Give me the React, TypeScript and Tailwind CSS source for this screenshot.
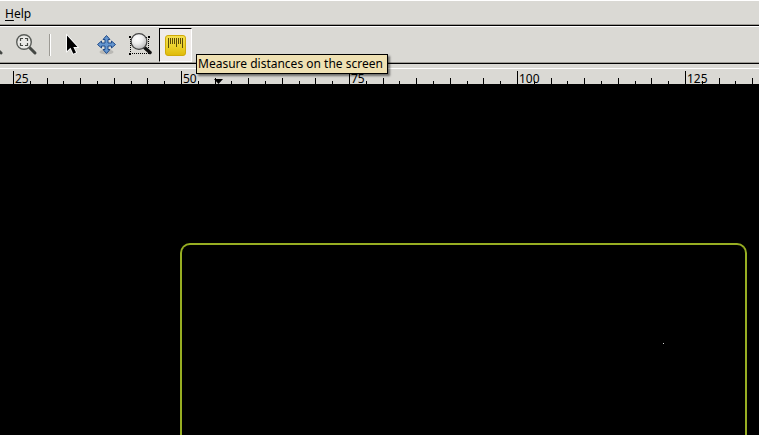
import type { ReactNode } from "react";

const MAJORS = [
  { x: 13, label: "25" },
  { x: 181, label: "50" },
  { x: 349, label: "75" },
  { x: 517, label: "100" },
  { x: 685, label: "125" },
];

function ZoomOutIcon() {
  return (
    <svg width="24" height="24" viewBox="0 0 24 24" fill="none">
      <circle cx="10" cy="9" r="7.3" fill="#e9e9e6" stroke="#5a5d59" strokeWidth="1.4" />
      <path d="M15.500 14.500l5.500 5.500" stroke="#454844" strokeWidth="3" strokeLinecap="round" />
    </svg>
  );
}

function ZoomFitIcon() {
  return (
    <svg width="24" height="24" viewBox="0 0 24 24" fill="none">
      <path d="M15.500 14.500l5.500 5.500" stroke="#454844" strokeWidth="3" strokeLinecap="round" />
      <circle cx="10" cy="9" r="7.3" fill="#e9e9e6" stroke="#5a5d59" strokeWidth="1.4" />
      <path
        d="M6.500 8V5.500H9M11 5.500h2.500V8M13.500 10v2.500H11M9 12.500H6.500V10"
        stroke="#454844"
        strokeWidth="1.200"
      />
    </svg>
  );
}

function ArrowIcon() {
  return (
    <svg width="24" height="24" viewBox="0 0 24 24">
      <path
        d="M7 2.500v15.500l3.500-3.200 2.800 6 2.700-1.300-2.700-5.500h4.200z"
        fill="#000"
        stroke="#fff"
        strokeWidth="1.600"
        paintOrder="stroke"
      />
    </svg>
  );
}

function MoveIcon() {
  return (
    <svg width="24" height="24" viewBox="0 0 24 24">
      <ellipse cx="12.500" cy="19" rx="7" ry="2.500" fill="#000" opacity="0.150" />
      <path
        d="M12.500 2.500l3.500 4h-2v3.500h3.500v-2l4 3.500-4 3.500v-2h-3.500v3.500h2l-3.500 4-3.500-4h2v-3.500h-3.500v2l-4-3.500 4-3.500v2h3.500v-3.500h-2z"
        fill="#6596cf"
        stroke="#204a87"
        strokeWidth="1"
        strokeLinejoin="round"
      />
    </svg>
  );
}

function ZoomSelectionIcon() {
  return (
    <svg width="24" height="24" viewBox="0 0 24 24" fill="none">
      <defs>
        <radialGradient id="lens" cx="0.38" cy="0.3" r="0.75">
          <stop offset="0" stopColor="#fff" />
          <stop offset="0.45" stopColor="#ededed" />
          <stop offset="1" stopColor="#b4b4b4" />
        </radialGradient>
      </defs>
      <path d="M2 4.500h18M2 20.500h18M2.500 4v17M20.500 4v17" stroke="#000" strokeDasharray="1 1" />
      <path d="M1 3h2v2H1zM20 3h2v2h-2zM1 20h2v2H1z" fill="#000" />
      <path d="M17 15l5 4.500" stroke="#111" strokeWidth="3.500" strokeLinecap="round" />
      <circle cx="11" cy="8.500" r="7.900" fill="url(#lens)" stroke="#444" strokeWidth="1.200" />
    </svg>
  );
}

function RulerIcon() {
  return (
    <svg width="24" height="24" viewBox="0 0 24 24">
      <defs>
        <linearGradient id="yellow" x1="0" y1="0" x2="0" y2="1">
          <stop offset="0" stopColor="#f5df50" />
          <stop offset="0.55" stopColor="#ecd22c" />
          <stop offset="1" stopColor="#dfba08" />
        </linearGradient>
      </defs>
      <rect x="1.500" y="2.500" width="20" height="20" rx="2.500" fill="url(#yellow)" stroke="#d0aa08" />
      <path
        d="M4.500 5v10M6.500 5v6M8.500 5v6M10.500 5v6M12.500 5v9M14.500 5v6M16.500 5v6M18.500 5v10"
        stroke="#5c4d08"
        fill="none"
      />
    </svg>
  );
}

function ToolButton({ label, children }: { label: string; children: ReactNode }) {
  return (
    <button
      type="button"
      aria-label={label}
      className="flex h-[34px] w-[34px] shrink-0 items-center justify-center"
    >
      {children}
    </button>
  );
}

function Ruler() {
  return (
    <svg className="relative z-10 block h-[15px] w-full overflow-visible" aria-label="Horizontal ruler">
      {MAJORS.map(({ x, label }) => (
        <g key={label}>
          <rect x={x} y="2" width="1" height="13" />
          {[1, 2, 3, 4, 5, 6, 7, 8, 9].map((n) => {
            const h = n % 2 ? 3 : 6;
            return (
              <rect key={n} x={Math.round(x + n * 16.8)} y={15 - h} width="1" height={h} />
            );
          })}
          <text x={x + 2} y="14" fontSize="12">
            {label}
          </text>
        </g>
      ))}
      <path d="M214 10h9l-4.500 5z" />
    </svg>
  );
}

export default function App() {
  return (
    <div className="flex min-h-screen flex-col overflow-hidden bg-[#dad9d4] font-['Noto_Sans','DejaVu_Sans_Condensed',sans-serif] text-[12px] text-black">
      <nav className="flex h-[26px] items-center border-t border-b border-t-white border-b-black pt-0.5 shadow-[inset_0_-1px_0_#9c9a94]">
        <button type="button" className="px-[5px] leading-4">
          <u className="underline-offset-2">H</u>elp
        </button>
      </nav>

      <div
        role="toolbar"
        className="flex h-[38px] items-center border-t border-b border-t-white border-b-black shadow-[inset_0_-1px_0_#9c9a94]"
      >
        <div className="-ml-[25px] flex items-center">
          <ToolButton label="Zoom out">
            <ZoomOutIcon />
          </ToolButton>
          <ToolButton label="Zoom to fit">
            <ZoomFitIcon />
          </ToolButton>
          <div className="mr-1 ml-1.5 h-[22px] w-[2px] border-l border-r border-l-[#9c9a94] border-r-white" />
          <ToolButton label="Select">
            <ArrowIcon />
          </ToolButton>
          <ToolButton label="Pan">
            <MoveIcon />
          </ToolButton>
          <ToolButton label="Zoom to selection">
            <ZoomSelectionIcon />
          </ToolButton>
        </div>
        <div className="relative ml-[2px]">
          <button
            type="button"
            aria-label="Measure"
            aria-pressed="true"
            aria-describedby="measure-tip"
            className="flex h-[34px] w-[33px] items-center justify-center border border-t-black border-r-white border-b-white border-l-black bg-[#efebe9] pl-px"
          >
            <RulerIcon />
          </button>
          <div
            id="measure-tip"
            role="tooltip"
            className="absolute top-[26px] left-[37px] z-20 flex h-[20px] items-center border border-black bg-[#efe1b3] pr-1 pl-px whitespace-nowrap shadow-[2px_2px_2px_rgba(0,0,0,0.5)]"
          >
            Measure distances on the screen
          </div>
        </div>
      </div>

      <div className="mt-1 border-t border-white">
        <Ruler />
      </div>

      <main className="relative flex-1 bg-black">
        <div className="absolute top-[159px] right-[12px] bottom-0 left-[180px] rounded-t-[10px] border-2 border-b-0 border-[#97ae22]" />
        <div className="absolute top-[259px] left-[663px] h-px w-px bg-[#d0d0d0]" />
      </main>
    </div>
  );
}
